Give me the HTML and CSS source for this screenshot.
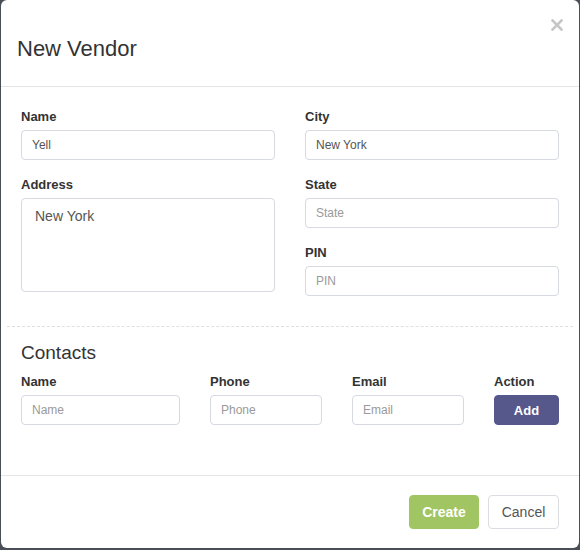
FILE: index.html
```html
<!DOCTYPE html>
<html>
<head>
<meta charset="utf-8">
<link rel="stylesheet" href="styles.css">
</head>
<body>
<div class="modal">
  <div class="modal-header">
    <button class="close" aria-label="Close">
      <svg width="12" height="12" viewBox="0 0 12 12"><path d="M1.5 1.5 L10.5 10.5 M10.5 1.5 L1.5 10.5" stroke="#c6c6c6" stroke-width="2.6" stroke-linecap="square"/></svg>
    </button>
    <h4 class="title">New Vendor</h4>
  </div>
  <div class="modal-body">
    <div class="two-col">
      <div class="col">
        <div class="group">
          <label class="lbl">Name</label>
          <input class="field" type="text" value="Yell">
        </div>
        <div class="group">
          <label class="lbl">Address</label>
          <textarea class="field area">New York</textarea>
        </div>
      </div>
      <div class="col">
        <div class="group">
          <label class="lbl">City</label>
          <input class="field" type="text" value="New York">
        </div>
        <div class="group">
          <label class="lbl">State</label>
          <input class="field" type="text" placeholder="State">
        </div>
        <div class="group">
          <label class="lbl">PIN</label>
          <input class="field" type="text" placeholder="PIN">
        </div>
      </div>
    </div>
    <hr class="dashed">
    <h3 class="sub">Contacts</h3>
    <div class="contacts">
      <div class="cgroup">
        <label class="lbl">Name</label>
        <input class="field" type="text" placeholder="Name">
      </div>
      <div class="cgroup">
        <label class="lbl">Phone</label>
        <input class="field" type="text" placeholder="Phone">
      </div>
      <div class="cgroup">
        <label class="lbl">Email</label>
        <input class="field" type="text" placeholder="Email">
      </div>
      <div class="cgroup">
        <label class="lbl">Action</label>
        <button class="btn btn-add">Add</button>
      </div>
    </div>
  </div>
  <div class="modal-footer">
    <button class="btn btn-create">Create</button>
    <button class="btn btn-cancel">Cancel</button>
  </div>
</div>
</body>
</html>
```
FILE: styles.css
```css
html, body {
  margin: 0;
  padding: 0;
}
body {
  background: #4a4e56;
  width: 580px;
  height: 550px;
  overflow: hidden;
  font-family: "Liberation Sans", Arial, sans-serif;
  color: #333;
}
.modal {
  position: relative;
  box-sizing: border-box;
  margin-left: 1px;
  width: 578px;
  height: 548px;
  background: #fff;
  border-radius: 6px;
}
.modal-header {
  padding: 37px 20px 25px 16px;
  border-bottom: 1px solid #e5e5e5;
}
.close {
  position: absolute;
  top: 19px;
  right: 16px;
  padding: 0;
  margin: 0;
  border: 0;
  background: none;
  width: 12px;
  height: 12px;
  line-height: 0;
}
.title {
  margin: 0;
  font-size: 22px;
  line-height: 24px;
  font-weight: normal;
  color: #333;
}
.modal-body {
  padding: 21px 20px 50px 20px;
}
.two-col {
  display: grid;
  grid-template-columns: 254px 254px;
  column-gap: 30px;
}
.group {
  display: flex;
  flex-direction: column;
  margin-bottom: 16px;
}
.lbl {
  display: block;
  font-size: 13px;
  line-height: 18px;
  font-weight: bold;
  color: #333;
  margin-bottom: 4px;
}
.field {
  box-sizing: border-box;
  display: block;
  width: 100%;
  height: 30px;
  margin: 0;
  padding: 0 10px;
  border: 1px solid #d6d9e1;
  border-radius: 4px;
  background: #fff;
  font-family: "Liberation Sans", Arial, sans-serif;
  font-size: 12px;
  color: #555;
  outline: none;
}
.field::placeholder {
  color: #9a9a9a;
}
.area {
  height: 94px;
  padding: 7px 13px;
  font-size: 14px;
  line-height: 20px;
  resize: none;
}
.dashed {
  margin: 14px -14px 0;
  border: 0;
  border-top: 1px dashed #e0e0e0;
  height: 0;
}
.sub {
  margin: 15px 0 9px;
  font-size: 19px;
  line-height: 22px;
  font-weight: normal;
  color: #333;
}
.contacts {
  display: grid;
  grid-template-columns: 159px 112px 112px 65px;
  column-gap: 30px;
}
.cgroup {
  display: flex;
  flex-direction: column;
}
.btn {
  box-sizing: border-box;
  font-family: "Liberation Sans", Arial, sans-serif;
  border-radius: 4px;
  cursor: pointer;
  margin: 0;
}
.btn-add {
  height: 30px;
  width: 65px;
  background: #56578b;
  border: 1px solid #56578b;
  color: #fff;
  font-weight: bold;
  font-size: 13px;
  padding: 0;
}
.modal-footer {
  border-top: 1px solid #e5e5e5;
  padding: 19px 20px 19px 20px;
  display: flex;
  justify-content: flex-end;
  gap: 9px;
}
.btn-create,
.btn-cancel {
  height: 34px;
  font-size: 14px;
  line-height: 20px;
  padding: 6px 0;
}
.btn-create {
  width: 70px;
  background: #a1c562;
  border: 1px solid #a1c562;
  color: #fff;
  font-weight: bold;
}
.btn-cancel {
  width: 71px;
  background: #fff;
  border: 1px solid #dcdde2;
  color: #555;
}
```
